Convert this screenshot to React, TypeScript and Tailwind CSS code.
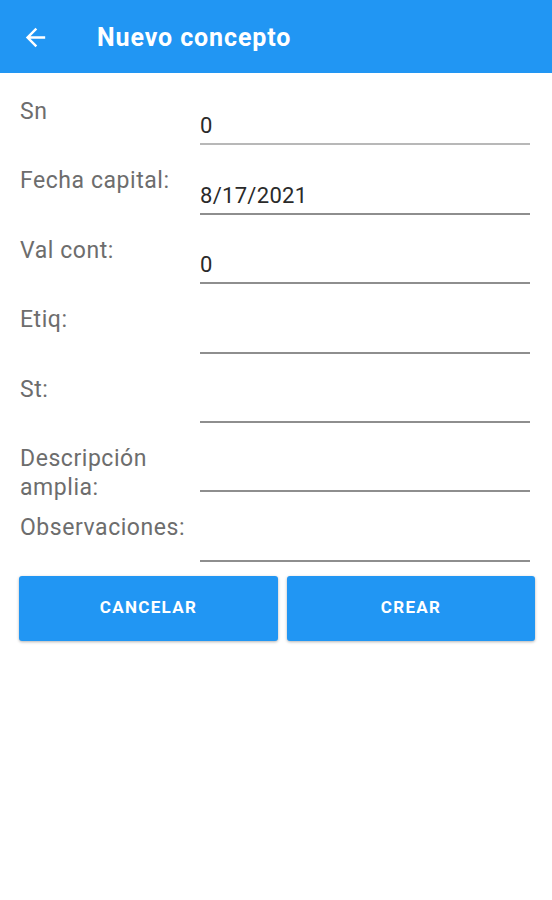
import React from "react";

const rows: { label: string[]; value: string; line: string }[] = [
  { label: ["Sn"], value: "0", line: "border-[#b8b8b8]" },
  { label: ["Fecha capital:"], value: "8/17/2021", line: "border-[#8e8e8e]" },
  { label: ["Val cont:"], value: "0", line: "border-[#8e8e8e]" },
  { label: ["Etiq:"], value: "", line: "border-[#8e8e8e]" },
  { label: ["St:"], value: "", line: "border-[#8e8e8e]" },
  { label: ["Descripción", "amplia:"], value: "", line: "border-[#8e8e8e]" },
  { label: ["Observaciones:"], value: "", line: "border-[#8e8e8e]" },
];

export default function App() {
  return (
    <div
      className="w-[552px] h-[900px] bg-white"
      style={{ fontFamily: "Roboto, 'Liberation Sans', sans-serif" }}
    >
      <div className="h-[73px] bg-[#2196F3] flex items-center pt-[2px]">
        <svg
          viewBox="0 0 24 24"
          className="w-[29px] h-[29px] ml-[21px] fill-white"
        >
          <path d="M20 11H7.83l5.59-5.59L12 4l-8 8 8 8 1.41-1.41L7.83 13H20v-2z" />
        </svg>
        <div className="ml-[47px] text-white text-[25px] font-bold tracking-[0.9px]">
          Nuevo concepto
        </div>
      </div>
      <div className="pt-[3px]">
        {rows.map((r, i) => (
          <div key={i} className="h-[69.4px] flex pl-[20px] pr-[22px]">
            <div className="w-[180px] pt-[21px] text-[23px] leading-[29px] tracking-[0.55px] text-[#6d6d6d]">
              {r.label.map((l, j) => (
                <div key={j}>{l}</div>
              ))}
            </div>
            <div className="flex-1 flex flex-col justify-end">
              <div
                className={`h-[38px] border-b-2 ${r.line} text-[22px] leading-[28px] tracking-[0.3px] text-[#2a2a2a] pt-[5px]`}
              >
                {r.value}
              </div>
            </div>
          </div>
        ))}
      </div>
      <div className="flex gap-[9px] pl-[19px] mt-[14px]">
        <button className="w-[259px] h-[65px] bg-[#2196F3] rounded-[3px] shadow-[0_1px_3px_rgba(0,0,0,0.3)] text-white text-[17px] font-bold uppercase tracking-[1.3px]">
          Cancelar
        </button>
        <button className="w-[248px] h-[65px] bg-[#2196F3] rounded-[3px] shadow-[0_1px_3px_rgba(0,0,0,0.3)] text-white text-[17px] font-bold uppercase tracking-[1.3px]">
          Crear
        </button>
      </div>
    </div>
  );
}
